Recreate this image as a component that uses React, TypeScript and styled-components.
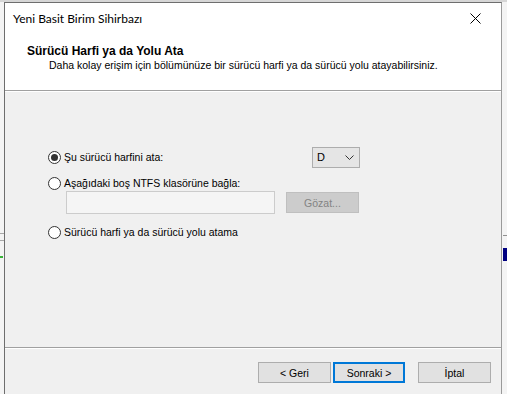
import React from "react";
import styled, { createGlobalStyle, css } from "styled-components";

const GlobalStyle = createGlobalStyle`
  html, body {
    margin: 0;
    padding: 0;
    width: 507px;
    height: 394px;
    overflow: hidden;
    background: #f2f2f2;
  }
  * { box-sizing: border-box; }
`;

const Desktop = styled.div`
  position: relative;
  width: 507px;
  height: 394px;
  overflow: hidden;
  background: #f4f4f4;
  font-family: "Liberation Sans", Arial, sans-serif;
  font-size: 10.5px;
  color: #000;
`;

const BackdropMark = styled.div<{ $top: number; $left: number; $w: number; $h: number; $c: string }>`
  position: absolute;
  top: ${(p) => p.$top}px;
  left: ${(p) => p.$left}px;
  width: ${(p) => p.$w}px;
  height: ${(p) => p.$h}px;
  background: ${(p) => p.$c};
`;

const Dialog = styled.div`
  position: absolute;
  left: 4px;
  top: 2px;
  width: 498px;
  height: 400px;
  border: 1px solid #6e6e6e;
  border-right-color: #9a9a9a;
  background: #f0f0f0;
  display: flex;
  flex-direction: column;
`;

const TitleBar = styled.div`
  height: 29px;
  background: #fff;
  display: flex;
  align-items: center;
  justify-content: space-between;
  padding-left: 8px;
  flex-shrink: 0;
`;

const Title = styled.span`
  font-family: Lato, "Segoe UI", sans-serif;
  font-size: 12px;
  padding-top: 2px;
`;

const CloseButton = styled.div`
  width: 46px;
  height: 29px;
  display: flex;
  align-items: center;
  justify-content: center;
  padding-top: 2px;
  margin-right: 3px;
`;

const Header = styled.div`
  height: 58px;
  background: #fff;
  padding: 12px 0 0 22px;
  flex-shrink: 0;
`;

const Heading = styled.div`
  font-weight: bold;
  font-size: 12px;
  line-height: 14px;
`;

const SubHeading = styled.div`
  font-size: 10.5px;
  line-height: 14px;
  padding-left: 22px;
`;

const Separator = styled.div`
  height: 2px;
  border-top: 1px solid #a0a0a0;
  border-bottom: 1px solid #fff;
  flex-shrink: 0;
`;

const Body = styled.div`
  height: 255px;
  padding: 54px 0 0 43px;
  flex-shrink: 0;
`;

const Row = styled.div<{ $h: number; $gap?: number; $indent?: number }>`
  display: flex;
  align-items: center;
  height: ${(p) => p.$h}px;
  margin-top: ${(p) => p.$gap ?? 0}px;
  padding-left: ${(p) => p.$indent ?? 0}px;
`;

const RadioLabel = styled.label<{ $w?: number }>`
  display: flex;
  align-items: center;
  gap: 3px;
  width: ${(p) => (p.$w ? `${p.$w}px` : "auto")};
`;

const RadioCircle = styled.span<{ $checked?: boolean }>`
  width: 13px;
  height: 13px;
  border-radius: 50%;
  border: 1px solid #333;
  background: #fff;
  display: flex;
  align-items: center;
  justify-content: center;
  &::after {
    content: "";
    width: 7px;
    height: 7px;
    border-radius: 50%;
    background: #333;
    display: ${(p) => (p.$checked ? "block" : "none")};
  }
`;

const Select = styled.div`
  width: 48px;
  height: 21px;
  border: 1px solid #adadad;
  background: #e5e5e5;
  display: flex;
  align-items: center;
  justify-content: space-between;
  padding: 0 5px 0 4px;
  font-size: 11px;
`;

const TextBox = styled.div`
  width: 209px;
  height: 23px;
  border: 1px solid #cccccc;
  background: #f5f5f5;
`;

const buttonBase = css`
  height: 21px;
  display: flex;
  align-items: center;
  justify-content: center;
  font-size: 10.5px;
`;

const Button = styled.div<{ $w: number; $default?: boolean; $disabled?: boolean }>`
  ${buttonBase};
  width: ${(p) => p.$w}px;
  background: ${(p) => (p.$disabled ? "#cccccc" : "#e1e1e1")};
  border: ${(p) => (p.$default ? "2px solid #0078d7" : p.$disabled ? "1px solid #bfbfbf" : "1px solid #adadad")};
  color: ${(p) => (p.$disabled ? "#838383" : "#000")};
`;

const Footer = styled.div`
  display: flex;
  justify-content: flex-end;
  padding: 13px 10px 0 0;
  gap: 2px;
`;

const Spacer = styled.div<{ $w: number }>`
  width: ${(p) => p.$w}px;
`;

export default function App() {
  return (
    <>
      <GlobalStyle />
      <Desktop>
        <BackdropMark $top={0} $left={0} $w={507} $h={2} $c="#d6d6d6" />
        <BackdropMark $top={233} $left={0} $w={4} $h={1} $c="#a8a8a8" />
        <BackdropMark $top={240} $left={0} $w={4} $h={1} $c="#a8a8a8" />
        <BackdropMark $top={256} $left={0} $w={3} $h={2} $c="#3ab43a" />
        <BackdropMark $top={248} $left={503} $w={4} $h={13} $c="#000080" />
        <BackdropMark $top={235} $left={503} $w={4} $h={1} $c="#909090" />
        <Dialog>
          <TitleBar>
            <Title>Yeni Basit Birim Sihirbazı</Title>
            <CloseButton>
              <svg width="11" height="11" viewBox="0 0 11 11">
                <path d="M0.5 0.5 L10.5 10.5 M10.5 0.5 L0.5 10.5" stroke="#000" strokeWidth="1" />
              </svg>
            </CloseButton>
          </TitleBar>
          <Header>
            <Heading>Sürücü Harfi ya da Yolu Ata</Heading>
            <SubHeading>Daha kolay erişim için bölümünüze bir sürücü harfi ya da sürücü yolu atayabilirsiniz.</SubHeading>
          </Header>
          <Separator />
          <Body>
            <Row $h={22}>
              <RadioLabel $w={264}>
                <RadioCircle $checked />
                Şu sürücü harfini ata:
              </RadioLabel>
              <Select>
                <span>D</span>
                <svg width="9" height="5" viewBox="0 0 9 5">
                  <path d="M0.5 0.5 L4.5 4.5 L8.5 0.5" stroke="#333" strokeWidth="1" fill="none" />
                </svg>
              </Select>
            </Row>
            <Row $h={16} $gap={7}>
              <RadioLabel>
                <RadioCircle />
                Aşağıdaki boş NTFS klasörüne bağla:
              </RadioLabel>
            </Row>
            <Row $h={23} $indent={18}>
              <TextBox />
              <Spacer $w={11} />
              <Button $w={73} $disabled>
                Gözat...
              </Button>
            </Row>
            <Row $h={16} $gap={10}>
              <RadioLabel>
                <RadioCircle />
                Sürücü harfi ya da sürücü yolu atama
              </RadioLabel>
            </Row>
          </Body>
          <Separator />
          <Footer>
            <Button $w={73}>&lt; Geri</Button>
            <Button $w={72} $default>
              Sonraki &gt;
            </Button>
            <Spacer $w={9} />
            <Button $w={73}>İptal</Button>
          </Footer>
        </Dialog>
      </Desktop>
    </>
  );
}
